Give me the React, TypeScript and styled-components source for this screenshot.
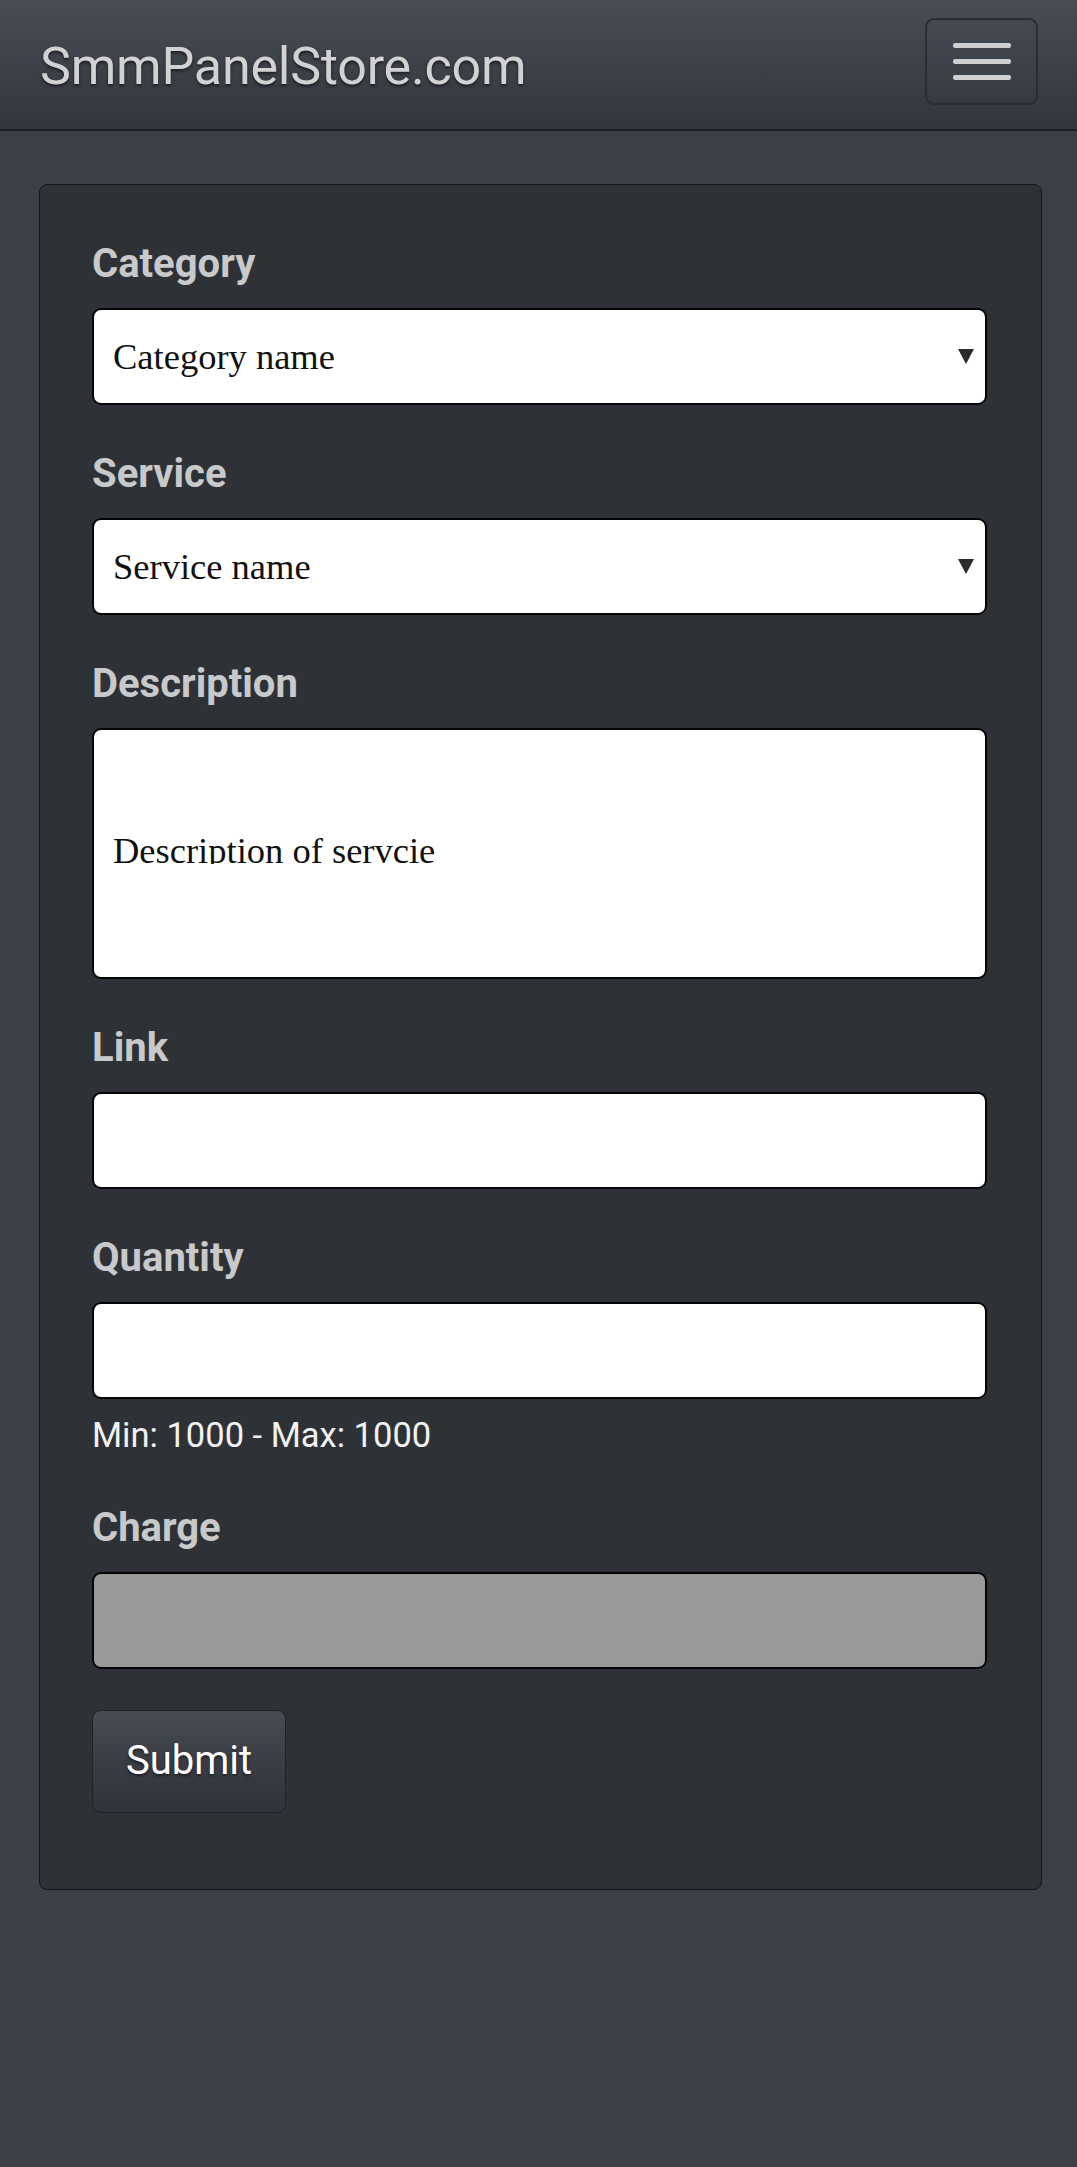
import React from "react";
import styled, { createGlobalStyle } from "styled-components";

const GlobalStyle = createGlobalStyle`
  html, body {
    margin: 0;
    padding: 0;
    background: #3c4049;
    font-family: Roboto, "Noto Sans", "Liberation Sans", sans-serif;
  }
  * {
    box-sizing: border-box;
  }
`;

const Page = styled.div`
  min-height: 2167px;
  background: #3c4049;
`;

const Navbar = styled.header`
  height: 131px;
  display: flex;
  align-items: center;
  justify-content: space-between;
  padding: 0 39px 0 40px;
  background: linear-gradient(to bottom, #484c55 0%, #3c4047 55%, #33363c 100%);
  border-bottom: 2px solid #1e2024;
`;

const Brand = styled.a`
  font-size: 52px;
  font-weight: 400;
  color: #d2d2d2;
  text-decoration: none;
  letter-spacing: -0.2px;
  text-shadow: 0 2px 3px rgba(0, 0, 0, 0.55);
  margin-top: 4px;
`;

const Toggler = styled.button`
  width: 113px;
  height: 87px;
  display: flex;
  align-items: center;
  justify-content: center;
  background: transparent;
  border: 2px solid #2a2d32;
  border-radius: 9px;
  padding: 0;
  margin-top: -6px;
`;

const Main = styled.main`
  padding: 53px 35px 0 39px;
`;

const Card = styled.section`
  background: #2e3236;
  border: 1px solid #15171a;
  border-radius: 8px;
  padding: 55px 54px 76px 52px;
`;

const Group = styled.div<{ $gap?: number }>`
  margin-bottom: ${(p) => p.$gap ?? 45}px;
`;

const Label = styled.label`
  display: block;
  font-size: 40px;
  line-height: 48px;
  font-weight: 700;
  color: #c8c9cb;
  margin-bottom: 20px;
`;

const Field = styled.div<{ $height?: number; $bg?: string }>`
  height: ${(p) => p.$height ?? 97}px;
  display: flex;
  align-items: center;
  justify-content: space-between;
  padding: 0 11px 0 19px;
  background: ${(p) => p.$bg ?? "#ffffff"};
  border: 2px solid #050505;
  border-radius: 9px;
  font-family: "Liberation Serif", "DejaVu Serif", serif;
  font-size: 36.5px;
  color: #111;
`;

/* the description value shows clipped at its baseline in the reference */
const ClippedText = styled.span`
  display: inline-block;
  line-height: 1;
  height: 0.87em;
  overflow: hidden;
  margin-bottom: 10px;
`;

const Hint = styled.div`
  margin-top: 12px;
  font-size: 34.5px;
  line-height: 48px;
  color: #f2f2f2;
`;

const SubmitButton = styled.button`
  font-family: Roboto, "Noto Sans", "Liberation Sans", sans-serif;
  font-size: 40px;
  line-height: 60px;
  padding: 20px 33px 21px;
  color: #ffffff;
  background: linear-gradient(to bottom, #474c53 0%, #3a3e44 50%, #30343a 100%);
  border: 1px solid #1f2226;
  border-radius: 9px;
  text-shadow: 0 2px 3px rgba(0, 0, 0, 0.5);
`;

const Caret = () => (
  <svg width="16" height="15" viewBox="0 0 16 15">
    <polygon points="0,0 16,0 8,15" fill="#2b2b2e" />
  </svg>
);

const MenuIcon = () => (
  <svg width="58" height="37" viewBox="0 0 58 37">
    <rect x="0" y="0" width="58" height="5" rx="2" fill="#cfcfcf" />
    <rect x="0" y="16" width="58" height="5" rx="2" fill="#cfcfcf" />
    <rect x="0" y="32" width="58" height="5" rx="2" fill="#cfcfcf" />
  </svg>
);

export default function App() {
  return (
    <Page>
      <GlobalStyle />
      <Navbar>
        <Brand href="#">SmmPanelStore.com</Brand>
        <Toggler aria-label="Toggle navigation">
          <MenuIcon />
        </Toggler>
      </Navbar>
      <Main>
        <Card>
          <Group>
            <Label>Category</Label>
            <Field>
              <span>Category name</span>
              <Caret />
            </Field>
          </Group>
          <Group>
            <Label>Service</Label>
            <Field>
              <span>Service name</span>
              <Caret />
            </Field>
          </Group>
          <Group>
            <Label>Description</Label>
            <Field $height={251}>
              <ClippedText>Description of servcie</ClippedText>
            </Field>
          </Group>
          <Group>
            <Label>Link</Label>
            <Field />
          </Group>
          <Group>
            <Label>Quantity</Label>
            <Field />
            <Hint>Min: 1000 - Max: 1000</Hint>
          </Group>
          <Group $gap={41}>
            <Label>Charge</Label>
            <Field $bg="#999999" />
          </Group>
          <SubmitButton>Submit</SubmitButton>
        </Card>
      </Main>
    </Page>
  );
}
